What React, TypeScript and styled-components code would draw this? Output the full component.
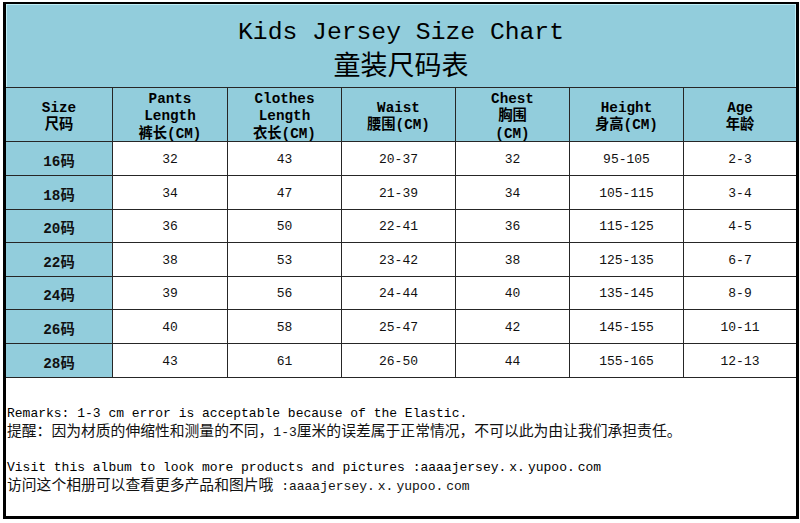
import React from "react";
import styled, { createGlobalStyle } from "styled-components";

const GlobalStyle = createGlobalStyle`
  html, body {
    margin: 0;
    padding: 0;
    background: #ffffff;
  }
`;

const MONO = `"Liberation Mono", "Noto Sans CJK SC", monospace`;
const CJK = `"Noto Sans CJK SC", "Liberation Mono", sans-serif`;

const Frame = styled.div`
  box-sizing: border-box;
  width: 796px;
  height: 517px;
  margin: 2px 0 0 3px;
  border: solid #000;
  border-width: 2px 3px 3px 3px;
  display: grid;
  grid-template-columns: 106px 114px 113px 113px 113px 113px 112px;
  grid-template-rows: 83px 53px 33px 33px 32px 33px 32px 33px 33px 1fr;
  gap: 1px;
  background: #262626;
`;

const TitleCell = styled.div`
  grid-column: 1 / -1;
  background: #92cddc;
  box-shadow: inset 1px 1px 0 #bfeef6, inset -1px 0 0 #bfeef6;
  display: flex;
  flex-direction: column;
  align-items: center;
  padding-top: 13px;
  color: #000;
`;

const TitleEn = styled.div`
  font-family: ${MONO};
  font-size: 24.7px;
  line-height: 30px;
  white-space: pre;
`;

const TitleCn = styled.div`
  font-family: ${CJK};
  font-size: 27px;
  line-height: 34px;
`;

const HeadCell = styled.div`
  box-sizing: border-box;
  background: #92cddc;
  display: flex;
  flex-direction: column;
  align-items: center;
  justify-content: center;
  padding-top: 5px;
  font-family: ${MONO};
  font-weight: bold;
  font-size: 14.3px;
  line-height: 17.5px;
  color: #000;
`;

const HeadLine = styled.span`
  display: block;
  height: 17.5px;
  white-space: pre;
`;

const DataCell = styled.div<{ $label?: boolean }>`
  background: ${(p) => (p.$label ? "#92cddc" : "#ffffff")};
  display: flex;
  align-items: center;
  justify-content: center;
  font-family: ${MONO};
  font-size: ${(p) => (p.$label ? "14.3px" : "13px")};
  font-weight: ${(p) => (p.$label ? "bold" : "normal")};
  color: #111;
  padding-top: 1px;
`;

const Remarks = styled.div`
  grid-column: 1 / -1;
  background: #ffffff;
  padding: 26px 0 0 1px;
  color: #000;
`;

const Block = styled.div<{ $gap?: boolean }>`
  margin-top: ${(p) => (p.$gap ? "16px" : "0")};
`;

const EnLine = styled.div`
  font-family: ${MONO};
  font-size: 13px;
  line-height: 19px;
  height: 19px;
  white-space: pre;
`;

const CnLine = styled.div`
  font-family: ${CJK};
  font-size: 14.8px;
  line-height: 13px;
  height: 19px;
  white-space: pre;
  color: #111;
`;

const Lat = styled.span`
  font-family: ${MONO};
  font-size: 13px;
  line-height: 13px;
`;

const Dot = styled.span`
  padding-right: 3px;
`;

function Url() {
  const parts = ["aaaajersey", "x", "yupoo", "com"];
  return (
    <>
      {parts.map((p, i) => (
        <React.Fragment key={p}>
          {p}
          {i < parts.length - 1 && <Dot>.</Dot>}
        </React.Fragment>
      ))}
    </>
  );
}

const headers: string[][] = [
  ["Size", "尺码"],
  ["Pants", "Length", "裤长(CM)"],
  ["Clothes", "Length", "衣长(CM)"],
  ["Waist", "腰围(CM)"],
  ["Chest", "胸围", "(CM)"],
  ["Height", "身高(CM)"],
  ["Age", "年龄"],
];

const rows: string[][] = [
  ["16码", "32", "43", "20-37", "32", "95-105", "2-3"],
  ["18码", "34", "47", "21-39", "34", "105-115", "3-4"],
  ["20码", "36", "50", "22-41", "36", "115-125", "4-5"],
  ["22码", "38", "53", "23-42", "38", "125-135", "6-7"],
  ["24码", "39", "56", "24-44", "40", "135-145", "8-9"],
  ["26码", "40", "58", "25-47", "42", "145-155", "10-11"],
  ["28码", "43", "61", "26-50", "44", "155-165", "12-13"],
];

export default function App() {
  return (
    <>
      <GlobalStyle />
      <Frame>
        <TitleCell>
          <TitleEn>Kids Jersey Size Chart</TitleEn>
          <TitleCn>童装尺码表</TitleCn>
        </TitleCell>
        {headers.map((h, i) => (
          <HeadCell key={`h${i}`}>
            {h.map((line, j) => (
              <HeadLine key={j}>{line}</HeadLine>
            ))}
          </HeadCell>
        ))}
        {rows.map((r, i) =>
          r.map((v, j) => (
            <DataCell key={`r${i}c${j}`} $label={j === 0}>
              {v}
            </DataCell>
          ))
        )}
        <Remarks>
          <Block>
            <EnLine>Remarks: 1-3 cm error is acceptable because of the Elastic.</EnLine>
            <CnLine>
              提醒：因为材质的伸缩性和测量的不同，<Lat>1-3</Lat>厘米的误差属于正常情况，不可以此为由让我们承担责任。
            </CnLine>
          </Block>
          <Block $gap>
            <EnLine>
              Visit this album to look more products and pictures :<Url />
            </EnLine>
            <CnLine>
              访问这个相册可以查看更多产品和图片哦
              <Lat>
                {" :"}
                <Url />
              </Lat>
            </CnLine>
          </Block>
        </Remarks>
      </Frame>
    </>
  );
}
